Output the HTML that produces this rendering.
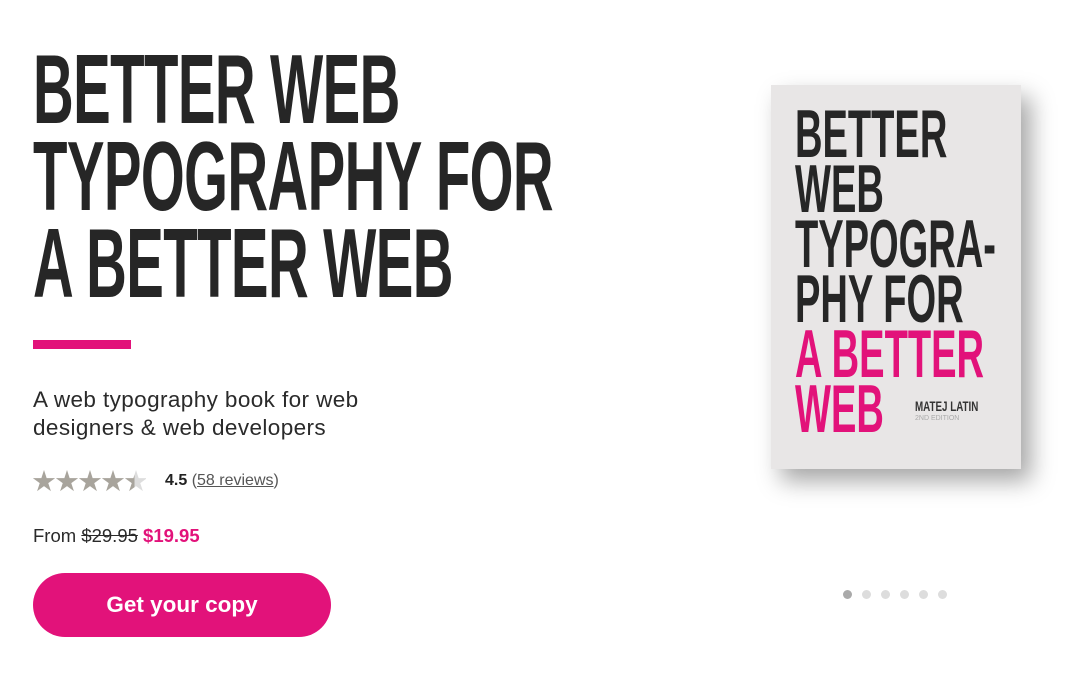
<!DOCTYPE html>
<html><head><meta charset="utf-8"><style>
*{margin:0;padding:0;box-sizing:border-box}
body{width:1073px;height:675px;background:#fff;position:relative;overflow:hidden;font-family:"Liberation Sans",sans-serif;color:#2a2a2a}
.h{position:absolute;left:33px;font-weight:bold;font-size:98px;line-height:1;transform:scaleX(0.575);transform-origin:left top;white-space:nowrap;color:#262626;letter-spacing:-1px}
.bar{position:absolute;left:33px;top:340px;width:98px;height:9px;background:#e2127a}
.sub{position:absolute;left:33px;top:386px;font-size:22.5px;letter-spacing:0.4px;line-height:28px;color:#2a2a2a}
.stars{position:absolute;left:31px;top:464px;font-size:29px;color:#a8a49c;letter-spacing:-3px}
.rt{position:absolute;left:165px;top:472px;font-size:16px;color:#555}
.rt b{color:#222}
.price{position:absolute;left:33px;top:525px;font-size:18.5px;color:#2a2a2a}
.btn{position:absolute;left:33px;top:573px;width:298px;height:64px;border-radius:32px;background:#e2127a;color:#fff;font-weight:bold;font-size:22.5px;text-align:center;line-height:64px}
.book{position:absolute;left:771px;top:85px;width:250px;height:384px;background:#e8e6e6;box-shadow:10px 12px 22px rgba(0,0,0,.35)}
.bt{position:absolute;left:24px;font-weight:bold;font-size:68px;line-height:1;transform:scaleX(0.56);transform-origin:left top;white-space:nowrap;color:#262626}
.dots{position:absolute;top:586px;left:843px}
.dots i{display:inline-block;width:9px;height:9px;border-radius:50%;background:#ddd;margin-right:10px}
</style></head><body>
<div class="h" style="top:40px">BETTER WEB</div>
<div class="h" style="top:127px">TYPOGRAPHY FOR</div>
<div class="h" style="top:214px">A BETTER WEB</div>
<div class="bar"></div>
<div class="sub">A web typography book for web<br>designers &amp; web developers</div>
<div class="stars">★★★★<span style="background:linear-gradient(90deg,#a8a49c 50%,#ddd 50%);-webkit-background-clip:text;color:transparent">★</span></div>
<div class="rt"><b>4.5</b> (<u>58 reviews</u>)</div>
<div class="price">From <s>$29.95</s> <b style="color:#e2127a">$19.95</b></div>
<div class="btn">Get your copy</div>
<div class="book">
<div class="bt" style="top:15px">BETTER</div>
<div class="bt" style="top:70px">WEB</div>
<div class="bt" style="top:125px">TYPOGRA-</div>
<div class="bt" style="top:180px">PHY FOR</div>
<div class="bt" style="top:235px;color:#e2127a">A BETTER</div>
<div class="bt" style="top:290px;color:#e2127a">WEB</div>
<div style="position:absolute;left:144px;top:313px;font-size:14px;font-weight:bold;transform:scaleX(.7);transform-origin:left;white-space:nowrap;color:#333">MATEJ LATIN</div>
<div style="position:absolute;left:144px;top:330px;font-size:7px;color:#aaa">2ND EDITION</div>
</div>
<div class="dots"><i style="background:#aaa"></i><i></i><i></i><i></i><i></i><i></i></div>
</body></html>
